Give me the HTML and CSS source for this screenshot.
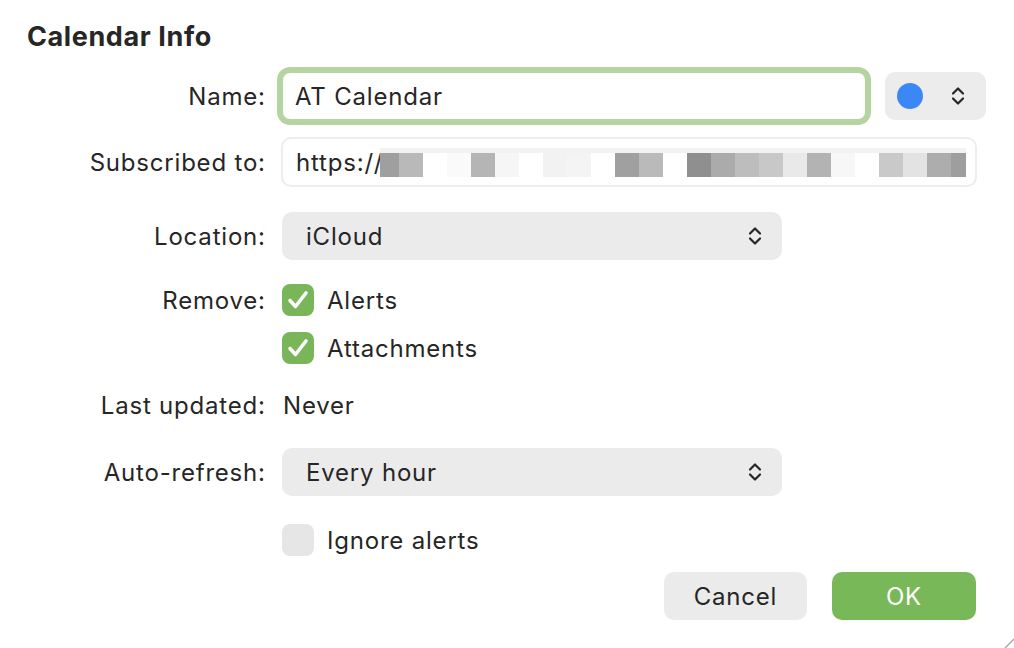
FILE: index.html
```html
<!DOCTYPE html>
<html lang="en">
<head>
<meta charset="utf-8">
<title>Calendar Info</title>
<link rel="stylesheet" href="styles.css">
</head>
<body>
<div class="dialog">
  <h1 class="title">Calendar Info</h1>

  <div class="row row-name">
    <span class="label">Name:</span>
    <div class="control inline">
      <div class="textfield focused">AT Calendar</div>
      <div class="color-popup">
        <span class="swatch"></span>
        <svg class="chevrons" width="16" height="22" viewBox="0 0 16 22"><path d="M3 8.5 8 3.5 13 8.5M3 13.5 8 18.5 13 13.5" fill="none" stroke="#262626" stroke-width="2.2" stroke-linecap="round" stroke-linejoin="round"/></svg>
      </div>
    </div>
  </div>

  <div class="row row-sub">
    <span class="label">Subscribed to:</span>
    <div class="control">
      <div class="textfield plain">
        <span class="url">https://</span>
        <span class="redact">
          <span class="band"></span>
          <span class="blocks">
            <i class="b first s9f"></i><i class="b sb9"></i><i class="b sff"></i><i class="b sfa"></i><i class="b sb5"></i><i class="b sf6"></i><i class="b sff"></i><i class="b sf2"></i><i class="b sf4"></i><i class="b sff"></i><i class="b sa0"></i><i class="b sba"></i><i class="b sff"></i><i class="b s8f"></i><i class="b sab"></i><i class="b sbd"></i><i class="b sc8"></i><i class="b se9"></i><i class="b sb3"></i><i class="b sf7"></i><i class="b sff"></i><i class="b sc9"></i><i class="b se3"></i><i class="b sad"></i><i class="b last s9e"></i>
          </span>
        </span>
      </div>
    </div>
  </div>

  <div class="row row-loc">
    <span class="label">Location:</span>
    <div class="control">
      <div class="popup">
        <span>iCloud</span>
        <svg class="chevrons" width="16" height="22" viewBox="0 0 16 22"><path d="M3 8.5 8 3.5 13 8.5M3 13.5 8 18.5 13 13.5" fill="none" stroke="#262626" stroke-width="2.2" stroke-linecap="round" stroke-linejoin="round"/></svg>
      </div>
    </div>
  </div>

  <div class="row row-alerts">
    <span class="label">Remove:</span>
    <div class="control">
      <div class="check">
        <span class="box on"><svg width="32" height="32" viewBox="0 0 32 32"><path d="M8 16.5 13.5 22.5 24 9" fill="none" stroke="#fff" stroke-width="3.6" stroke-linecap="round" stroke-linejoin="round"/></svg></span>
        <span>Alerts</span>
      </div>
    </div>
  </div>

  <div class="row row-attach">
    <span class="label"></span>
    <div class="control">
      <div class="check">
        <span class="box on"><svg width="32" height="32" viewBox="0 0 32 32"><path d="M8 16.5 13.5 22.5 24 9" fill="none" stroke="#fff" stroke-width="3.6" stroke-linecap="round" stroke-linejoin="round"/></svg></span>
        <span>Attachments</span>
      </div>
    </div>
  </div>

  <div class="row row-updated">
    <span class="label">Last updated:</span>
    <div class="control value">Never</div>
  </div>

  <div class="row row-refresh">
    <span class="label">Auto-refresh:</span>
    <div class="control">
      <div class="popup">
        <span>Every hour</span>
        <svg class="chevrons" width="16" height="22" viewBox="0 0 16 22"><path d="M3 8.5 8 3.5 13 8.5M3 13.5 8 18.5 13 13.5" fill="none" stroke="#262626" stroke-width="2.2" stroke-linecap="round" stroke-linejoin="round"/></svg>
      </div>
    </div>
  </div>

  <div class="row row-ignore">
    <span class="label"></span>
    <div class="control">
      <div class="check">
        <span class="box off"></span>
        <span>Ignore alerts</span>
      </div>
    </div>
  </div>

  <div class="buttons">
    <button class="btn cancel">Cancel</button>
    <button class="btn ok">OK</button>
  </div>

  <svg class="grip" width="12" height="12" viewBox="0 0 12 12"><path d="M12 3 3 12" stroke="#a8a8a8" stroke-width="1.5"/></svg>
</div>
</body>
</html>
```

FILE: styles.css
```css
* { box-sizing: border-box; }

html, body {
  margin: 0;
  padding: 0;
  background: #ffffff;
}

body {
  width: 1014px;
  height: 648px;
  overflow: hidden;
  font-family: Inter, "Noto Sans", "Liberation Sans", sans-serif;
  font-size: 24px;
  letter-spacing: 0.8px;
  color: #262626;
}

.dialog {
  position: relative;
  width: 1014px;
  height: 648px;
  padding-top: 22px;
}

.title {
  margin: 0;
  padding-left: 27px;
  height: 30px;
  line-height: 30px;
  font-size: 27px;
  font-weight: 700;
  color: #262626;
  letter-spacing: 0.6px;
}

.row {
  display: grid;
  grid-template-columns: 265px 1fr;
  column-gap: 17px;
  align-items: center;
}

.label {
  text-align: right;
  white-space: nowrap;
  margin-right: -0.8px;
}

.control.inline {
  display: flex;
  align-items: center;
}

/* row heights and spacing */
.row-name    { height: 48px; margin-top: 20px; }
.row-sub     { height: 50px; margin-top: 17px; }
.row-loc     { height: 48px; margin-top: 25px; }
.row-alerts  { height: 32px; margin-top: 24px; }
.row-attach  { height: 32px; margin-top: 16px; }
.row-updated { height: 30px; margin-top: 26px; }
.row-refresh { height: 48px; margin-top: 28px; }
.row-ignore  { height: 32px; margin-top: 28px; }

/* text fields */
.textfield {
  display: flex;
  align-items: center;
  background: #fff;
  white-space: nowrap;
  overflow: hidden;
}

.textfield.focused {
  margin-left: 1px;
  width: 582px;
  height: 46px;
  padding-left: 12px;
  border-radius: 7px;
  box-shadow: 0 0 0 6px #b4d4a1;
}

.textfield.plain {
  margin-left: -1px;
  width: 696px;
  height: 50px;
  padding-left: 13px;
  border: 2px solid #ededed;
  border-radius: 10px;
}

.url { flex: none; }

.redact {
  display: flex;
  flex-direction: column;
  width: 586px;
  height: 29px;
  margin-top: 1px;
  margin-left: -3px;
  flex: none;
}

.band {
  height: 5px;
  background: #f2f2f2;
}

.blocks {
  display: flex;
  height: 24px;
}

.b { display: block; width: 24px; height: 24px; flex: none; }
.b.first { width: 19px; }
.b.last { width: 15px; }

.s9f { background: #9f9f9f; }
.sb9 { background: #b9b9b9; }
.sff { background: #ffffff; }
.sfa { background: #fafafa; }
.sb5 { background: #b5b5b5; }
.sf6 { background: #f6f6f6; }
.sf2 { background: #f2f2f2; }
.sf4 { background: #f4f4f4; }
.sa0 { background: #a0a0a0; }
.sba { background: #bababa; }
.s8f { background: #8f8f8f; }
.sab { background: #ababab; }
.sbd { background: #bdbdbd; }
.sc8 { background: #c8c8c8; }
.se9 { background: #e9e9e9; }
.sb3 { background: #b3b3b3; }
.sf7 { background: #f7f7f7; }
.sc9 { background: #c9c9c9; }
.se3 { background: #e3e3e3; }
.sad { background: #adadad; }
.s9e { background: #9e9e9e; }

/* colour popup */
.color-popup {
  margin-left: 20px;
  width: 101px;
  height: 48px;
  background: #ececec;
  border-radius: 10px;
  display: flex;
  align-items: center;
  padding-left: 12px;
  padding-right: 20px;
  justify-content: space-between;
}

.swatch {
  width: 26px;
  height: 26px;
  border-radius: 50%;
  background: #3b87f5;
}

/* pop-up buttons */
.popup {
  width: 500px;
  height: 48px;
  background: #ebebeb;
  border-radius: 10px;
  display: flex;
  align-items: center;
  justify-content: space-between;
  padding-left: 24px;
  padding-right: 19px;
}

.chevrons { display: block; flex: none; }

/* checkboxes */
.check {
  display: flex;
  align-items: center;
  gap: 13px;
}

.box {
  width: 32px;
  height: 32px;
  border-radius: 8px;
  flex: none;
}

.box svg { display: block; }

.box.on { background: #78b659; }
.box.off { background: #e6e6e6; }

.value { padding-left: 1px; }

/* bottom buttons */
.buttons {
  display: flex;
  justify-content: flex-end;
  gap: 25px;
  margin-top: 16px;
  padding-right: 38px;
}

.btn {
  font: inherit;
  font-size: 24px;
  letter-spacing: 0.8px;
  height: 48px;
  width: 143px;
  border: none;
  border-radius: 10px;
  padding: 0;
}

.btn.cancel { background: #ebebeb; color: #262626; }
.btn.ok { width: 144px; background: #78b858; color: #ffffff; }

.grip {
  position: absolute;
  right: 0;
  bottom: 0;
}
```
